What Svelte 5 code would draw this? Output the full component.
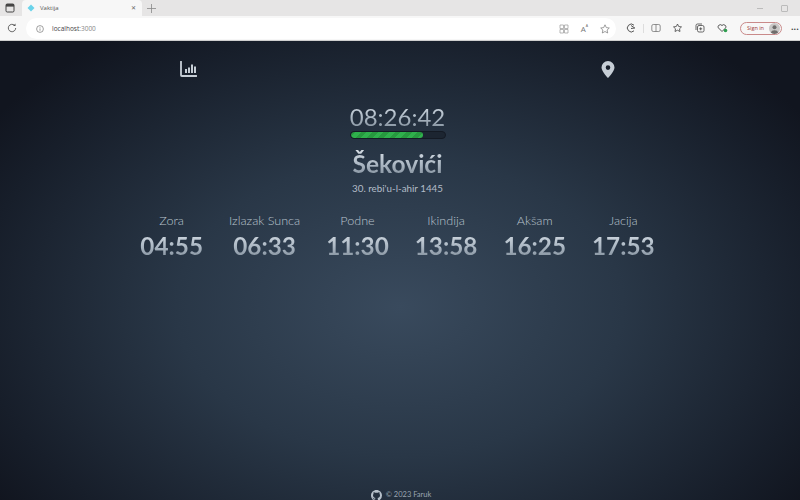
<script>
  const times = [
    { name: 'Zora', time: '04:55' },
    { name: 'Izlazak Sunca', time: '06:33' },
    { name: 'Podne', time: '11:30' },
    { name: 'Ikindija', time: '13:58' },
    { name: 'Akšam', time: '16:25' },
    { name: 'Jacija', time: '17:53' }
  ];
</script>

<div class="window">
  <div class="tabstrip">
    <svg class="winicon" width="10" height="10" viewBox="0 0 10 10"><rect x="1" y="1" width="8" height="8" rx="1.2" fill="none" stroke="#444" stroke-width="1"/><rect x="1" y="1" width="8" height="2.6" fill="#444"/></svg>
    <div class="tab">
      <svg width="8" height="8" viewBox="0 0 8 8"><path d="M4 .5 7.5 4 4 7.500.5 4z" fill="#6ad3ea"/></svg>
      <span class="tabtitle">Vaktija</span>
      <span class="tabx">✕</span>
    </div>
    <svg class="plus" width="9" height="9" viewBox="0 0 9 9"><path d="M4.500 0v9M0 4.500h9" stroke="#888" stroke-width=".8"/></svg>
    <div class="winctl">
      <span class="min"></span>
      <span class="max"></span>
    </div>
  </div>
  <div class="toolbar">
    <svg class="reload" width="10" height="10" viewBox="0 0 10 10"><path d="M8.700 5A3.700 3.700 0 1 1 7.500 2.300" fill="none" stroke="#555" stroke-width=".9"/><path d="M8.500 .6v2.500H6z" fill="#555"/></svg>
    <div class="address">
      <svg width="8" height="8" viewBox="0 0 8 8"><circle cx="4" cy="4" r="3.400" fill="none" stroke="#777" stroke-width=".7"/><path d="M4 3.400v2.400M4 2v.7" stroke="#777" stroke-width=".7"/></svg>
      <span class="url"><b>localhost</b>:3000</span>
      <div class="addr-icons">
        <svg width="10" height="10" viewBox="0 0 10 10"><path d="M1 1h3.500v3.500H1zM1 5.500h3.500V9H1zM5.500 5.500H9V9H5.500zM5.500 1H9v3.500H5.500z" fill="none" stroke="#999" stroke-width=".7"/></svg>
        <span class="aa">A<sup>ᴬ</sup></span>
        <svg width="10" height="10" viewBox="0 0 10 10"><path d="M5 .8 6.300 3.600 9.300 4 7.100 6 7.700 9 5 7.500 2.300 9 2.900 6 .7 4 3.700 3.600z" fill="none" stroke="#777" stroke-width=".7"/></svg>
      </div>
    </div>
    <div class="tools">
      <svg width="10" height="10" viewBox="0 0 10 10"><path d="M8 2.200A3.900 3.900 0 1 0 8 7.800M5 2.500 8.800 5 5 5.500" fill="none" stroke="#444" stroke-width=".9"/></svg>
      <span class="sep"></span>
      <svg width="10" height="10" viewBox="0 0 10 10"><rect x=".8" y="1.500" width="8.400" height="7" rx="1.500" fill="none" stroke="#666" stroke-width=".7"/><path d="M5 1.500v7" stroke="#666" stroke-width=".7"/></svg>
      <svg width="10" height="10" viewBox="0 0 10 10"><path d="M4.500 1 5.700 3.500 8.500 3.900 6.500 5.800 7 8.500 4.500 7.200 2 8.500 2.500 5.800.5 3.900 3.300 3.500z" fill="none" stroke="#444" stroke-width=".8"/></svg>
      <svg width="10" height="10" viewBox="0 0 10 10"><rect x="2.500" y="2.500" width="6.500" height="6.500" rx="1.500" fill="none" stroke="#444" stroke-width=".8"/><path d="M1 7V2.500A1.500 1.500 0 0 1 2.500 1H7M5.700 4.300v3M4.200 5.800h3" fill="none" stroke="#444" stroke-width=".8"/></svg>
      <svg width="11" height="10" viewBox="0 0 11 10"><path d="M5 8.500 1.300 4.800A2.200 2.200 0 0 1 5 2.500a2.200 2.200 0 0 1 3.700 2.300z" fill="none" stroke="#444" stroke-width=".9"/><circle cx="8.500" cy="7.500" r="1.800" fill="#2e9e4f"/></svg>
      <div class="signin">
        <span>Sign in</span>
        <svg width="11" height="11" viewBox="0 0 11 11"><circle cx="5.500" cy="5.500" r="5.500" fill="#c9c7c6"/><circle cx="5.500" cy="4.200" r="2" fill="#6f6d6c"/><path d="M1.800 9.500a3.800 3 0 0 1 7.400 0 5.500 5.500 0 0 1-7.400 0z" fill="#6f6d6c"/></svg>
      </div>
      <span class="dots">···</span>
    </div>
  </div>

  <main class="page">
    <div class="top-icons">
      <svg width="17" height="16" viewBox="0 0 17 16"><path d="M1 .5v13.700a.8.8 0 0 0 .8.800H16.500" fill="none" stroke="#c6ced6" stroke-width="1.800" stroke-linecap="round"/><path d="M5 8h2v4H5zM8 6.500h2V12H8zM11 3.500h2V12h-2zM14 5.500h2V12h-2z" fill="#c6ced6"/></svg>
      <svg width="14" height="17" viewBox="0 0 14 17"><path fill-rule="evenodd" d="M7 0a6.500 6.500 0 0 1 6.500 6.500C13.500 10.500 7 17 7 17S.5 10.500.5 6.500A6.500 6.500 0 0 1 7 0zm0 4.300a2.300 2.300 0 1 0 0 4.600 2.300 2.300 0 0 0 0-4.600z" fill="#c6ced6"/></svg>
    </div>

    <section class="now">
      <div class="clock grad">08:26:42</div>
      <div class="progress"><div class="bar" style="width: 77%"></div></div>
      <h1 class="grad">Šekovići</h1>
      <div class="date">30. rebi'u-l-ahir 1445</div>
    </section>

    <section class="times">
      {#each times as t}
        <div class="slot">
          <div class="name">{t.name}</div>
          <div class="time grad">{t.time}</div>
        </div>
      {/each}
    </section>

    <footer>
      <svg width="11" height="11" viewBox="0 0 16 16"><path fill="#b6c0ca" d="M8 0C3.580 0 0 3.580 0 8c0 3.540 2.290 6.530 5.470 7.590.4.070.55-.17.55-.38 0-.19-.01-.82-.01-1.490-2.010.37-2.530-.49-2.690-.94-.09-.23-.48-.94-.82-1.130-.28-.15-.68-.52-.01-.53.630-.01 1.080.58 1.230.82.720 1.210 1.870.87 2.330.66.070-.52.280-.87.510-1.070-1.780-.2-3.640-.89-3.640-3.950 0-.87.310-1.590.820-2.150-.08-.2-.36-1.020.08-2.120 0 0 .67-.21 2.200.82.640-.18 1.320-.27 2-.27s1.360.09 2 .27c1.530-1.040 2.200-.82 2.200-.82.440 1.100.16 1.920.08 2.120.51.560.82 1.270.82 2.150 0 3.070-1.870 3.750-3.650 3.950.29.250.54.730.54 1.480 0 1.070-.01 1.930-.01 2.200 0 .21.150.46.550.38A8.010 8.010 0 0 0 16 8c0-4.420-3.580-8-8-8z"/></svg>
      <span>© 2023 Faruk</span>
    </footer>
  </main>
</div>

<style>
  :global(body) {
    margin: 0;
    overflow: hidden;
  }
  .window {
    width: 800px;
    height: 500px;
    display: flex;
    flex-direction: column;
    font-family: "Open Sans", "Liberation Sans", sans-serif;
  }
  .tabstrip {
    height: 16px;
    background: #e6e5e5;
    display: flex;
    align-items: flex-end;
    padding-left: 5px;
  }
  .winicon {
    margin-bottom: 3px;
    margin-right: 7px;
  }
  .tab {
    width: 120px;
    height: 16px;
    background: #f7f7f7;
    border-radius: 4px 4px 0 0;
    display: flex;
    align-items: center;
    padding: 0 6px 0 5px;
    box-sizing: border-box;
    gap: 5px;
    font-size: 6px;
    color: #555;
  }
  .tabtitle {
    flex: 1;
  }
  .tabx {
    font-size: 6px;
    color: #666;
  }
  .plus {
    margin: 0 0 3px 5px;
  }
  .winctl {
    margin-left: auto;
    display: flex;
    align-items: center;
    gap: 18px;
    height: 16px;
    padding-right: 12px;
  }
  .min {
    width: 6px;
    border-top: 1px solid #bbb;
  }
  .max {
    width: 5px;
    height: 5px;
    border: 1px solid #bbb;
    border-radius: 1px;
  }
  .toolbar {
    height: 24px;
    background: #f7f7f7;
    border-bottom: 1px solid #cfcfcf;
    display: flex;
    align-items: center;
    padding-left: 7px;
  }
  .address {
    margin-left: 9px;
    width: 590px;
    height: 21px;
    background: #fff;
    border-radius: 11px;
    display: flex;
    align-items: center;
    padding: 0 6px 0 10px;
    box-sizing: border-box;
    gap: 8px;
    margin-top: 1px;
  }
  .url {
    font-size: 6.500px;
    color: #888;
  }
  .url b {
    font-weight: 400;
    color: #444;
  }
  .addr-icons {
    margin-left: auto;
    display: flex;
    align-items: center;
    gap: 12px;
  }
  .aa {
    font-size: 8px;
    color: #777;
  }
  .aa sup {
    font-size: 5px;
    line-height: 0;
  }
  .tools {
    margin-left: 10px;
    flex: 1;
    display: flex;
    align-items: center;
    gap: 12px;
  }
  .sep {
    width: 1px;
    height: 9px;
    background: #ddd;
    margin: 0 -5px;
  }
  .signin {
    display: flex;
    align-items: center;
    justify-content: space-between;
    width: 42px;
    height: 13px;
    padding: 0 1px 0 6px;
    border: 1px solid #c98a8a;
    border-radius: 7px;
    box-sizing: border-box;
    font-size: 5.500px;
    color: #a23b3b;
  }
  .dots {
    font-size: 9px;
    color: #444;
    font-weight: 700;
    margin-left: -3px;
  }
  .page {
    flex: 1;
    position: relative;
    display: flex;
    flex-direction: column;
    align-items: center;
    padding-right: 5px;
    box-sizing: border-box;
    background: radial-gradient(ellipse 62% 72% at 50% 58%, #394a5d 0%, #293747 45%, #171e2a 85%, #11151f 100%);
    font-family: Lato, "Open Sans", sans-serif;
    color: #b9c3cd;
  }
  .grad {
    background: linear-gradient(180deg, #d8dfe6 0%, #adb9c5 50%, #7a8794 100%);
    -webkit-background-clip: text;
    background-clip: text;
    color: transparent;
  }
  .top-icons {
    width: 435px;
    display: flex;
    justify-content: space-between;
    align-items: flex-start;
    padding-top: 20px;
  }
  .now {
    display: flex;
    flex-direction: column;
    align-items: center;
    margin-top: 24px;
  }
  .clock {
    font-size: 24px;
    line-height: 30px;
    font-weight: 400;
  }
  .progress {
    width: 96px;
    height: 8px;
    margin-top: -1px;
    border-radius: 4px;
    background: #1c2531;
    border: 1px solid #141a24;
    box-sizing: border-box;
    overflow: hidden;
  }
  .bar {
    height: 100%;
    border-radius: 4px;
    background: repeating-linear-gradient(-45deg, #2fb04c 0 4px, #27993f 4px 8px);
  }
  h1 {
    margin: 10px 0 0;
    font-size: 24.500px;
    line-height: 30px;
    font-weight: 700;
  }
  .date {
    font-size: 9.800px;
    line-height: 14px;
    margin-top: 2px;
    color: #b3bdc8;
  }
  .times {
    display: flex;
    justify-content: center;
    gap: 26px;
    margin-top: 18px;
  }
  .slot {
    text-align: center;
  }
  .name {
    font-size: 12.600px;
    line-height: 15px;
    margin-bottom: 3px;
    font-weight: 300;
    color: #b9c3cd;
    white-space: nowrap;
  }
  .time {
    font-size: 24.300px;
    line-height: 30px;
    font-weight: 700;
  }
  footer {
    position: absolute;
    bottom: 0;
    left: 2px;
    right: 0;
    height: 10px;
    display: flex;
    justify-content: center;
    gap: 4px;
    font-size: 7.500px;
    color: #9aa5b0;
  }
  footer svg {
    flex: none;
  }
</style>
